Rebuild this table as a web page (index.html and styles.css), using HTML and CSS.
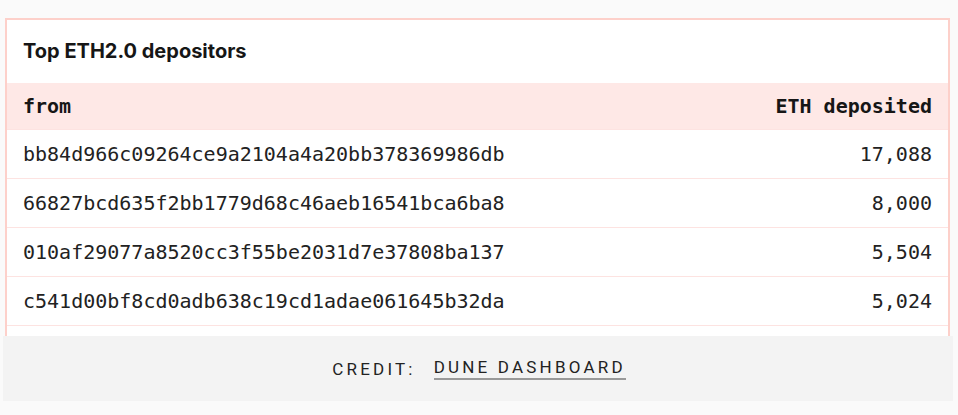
FILE: index.html
```html
<!DOCTYPE html>
<html>
<head>
<meta charset="utf-8">
<link rel="stylesheet" href="styles.css">
</head>
<body>
<div class="card">
  <div class="title">Top ETH2.0 depositors</div>
  <div class="row head"><span>from</span><span>ETH deposited</span></div>
  <div class="row"><span>bb84d966c09264ce9a2104a4a20bb378369986db</span><span>17,088</span></div>
  <div class="row"><span>66827bcd635f2bb1779d68c46aeb16541bca6ba8</span><span>8,000</span></div>
  <div class="row"><span>010af29077a8520cc3f55be2031d7e37808ba137</span><span>5,504</span></div>
  <div class="row"><span>c541d00bf8cd0adb638c19cd1adae061645b32da</span><span>5,024</span></div>
  <div class="row"><span></span><span></span></div>
</div>
<div class="credit">CREDIT: <a class="link">DUNE DASHBOARD</a></div>
</body>
</html>
```
FILE: styles.css
```css
html, body {
  margin: 0;
  padding: 0;
  background: #fafafa;
}
body {
  padding-top: 18px;
}
.card {
  box-sizing: border-box;
  margin-left: 5px;
  width: 945px;
  height: 318px;
  overflow: hidden;
  background: #fff;
  border: 2px solid #fdd0ca;
  border-bottom: none;
}
.title {
  height: 63px;
  box-sizing: border-box;
  padding: 19px 0 0 16px;
  font-family: Inter, "Noto Sans", sans-serif;
  font-weight: 700;
  font-size: 20px;
  line-height: 24px;
  color: #161616;
}
.row {
  display: flex;
  justify-content: space-between;
  align-items: center;
  box-sizing: border-box;
  height: 49px;
  padding: 0 16px;
  border-bottom: 1px solid #fde3e1;
  font-family: "DejaVu Sans Mono", "Liberation Mono", monospace;
  font-size: 20px;
  color: #222;
}
.row.head {
  height: 47px;
  background: #fee8e6;
  border-bottom: 1px solid #fde3e1;
  font-weight: 700;
  color: #161616;
}
.credit {
  box-sizing: border-box;
  margin-left: 3px;
  width: 950px;
  height: 65px;
  background: #f3f3f3;
  display: flex;
  align-items: center;
  justify-content: center;
  gap: 18px;
  font-family: Roboto, "Liberation Sans", sans-serif;
  font-size: 17px;
  letter-spacing: 3.2px;
  color: #222;
  padding-left: 2px;
}
.link {
  color: #222;
  text-decoration: none;
  border-bottom: 2px solid #999;
  padding-bottom: 1px;
}
```
